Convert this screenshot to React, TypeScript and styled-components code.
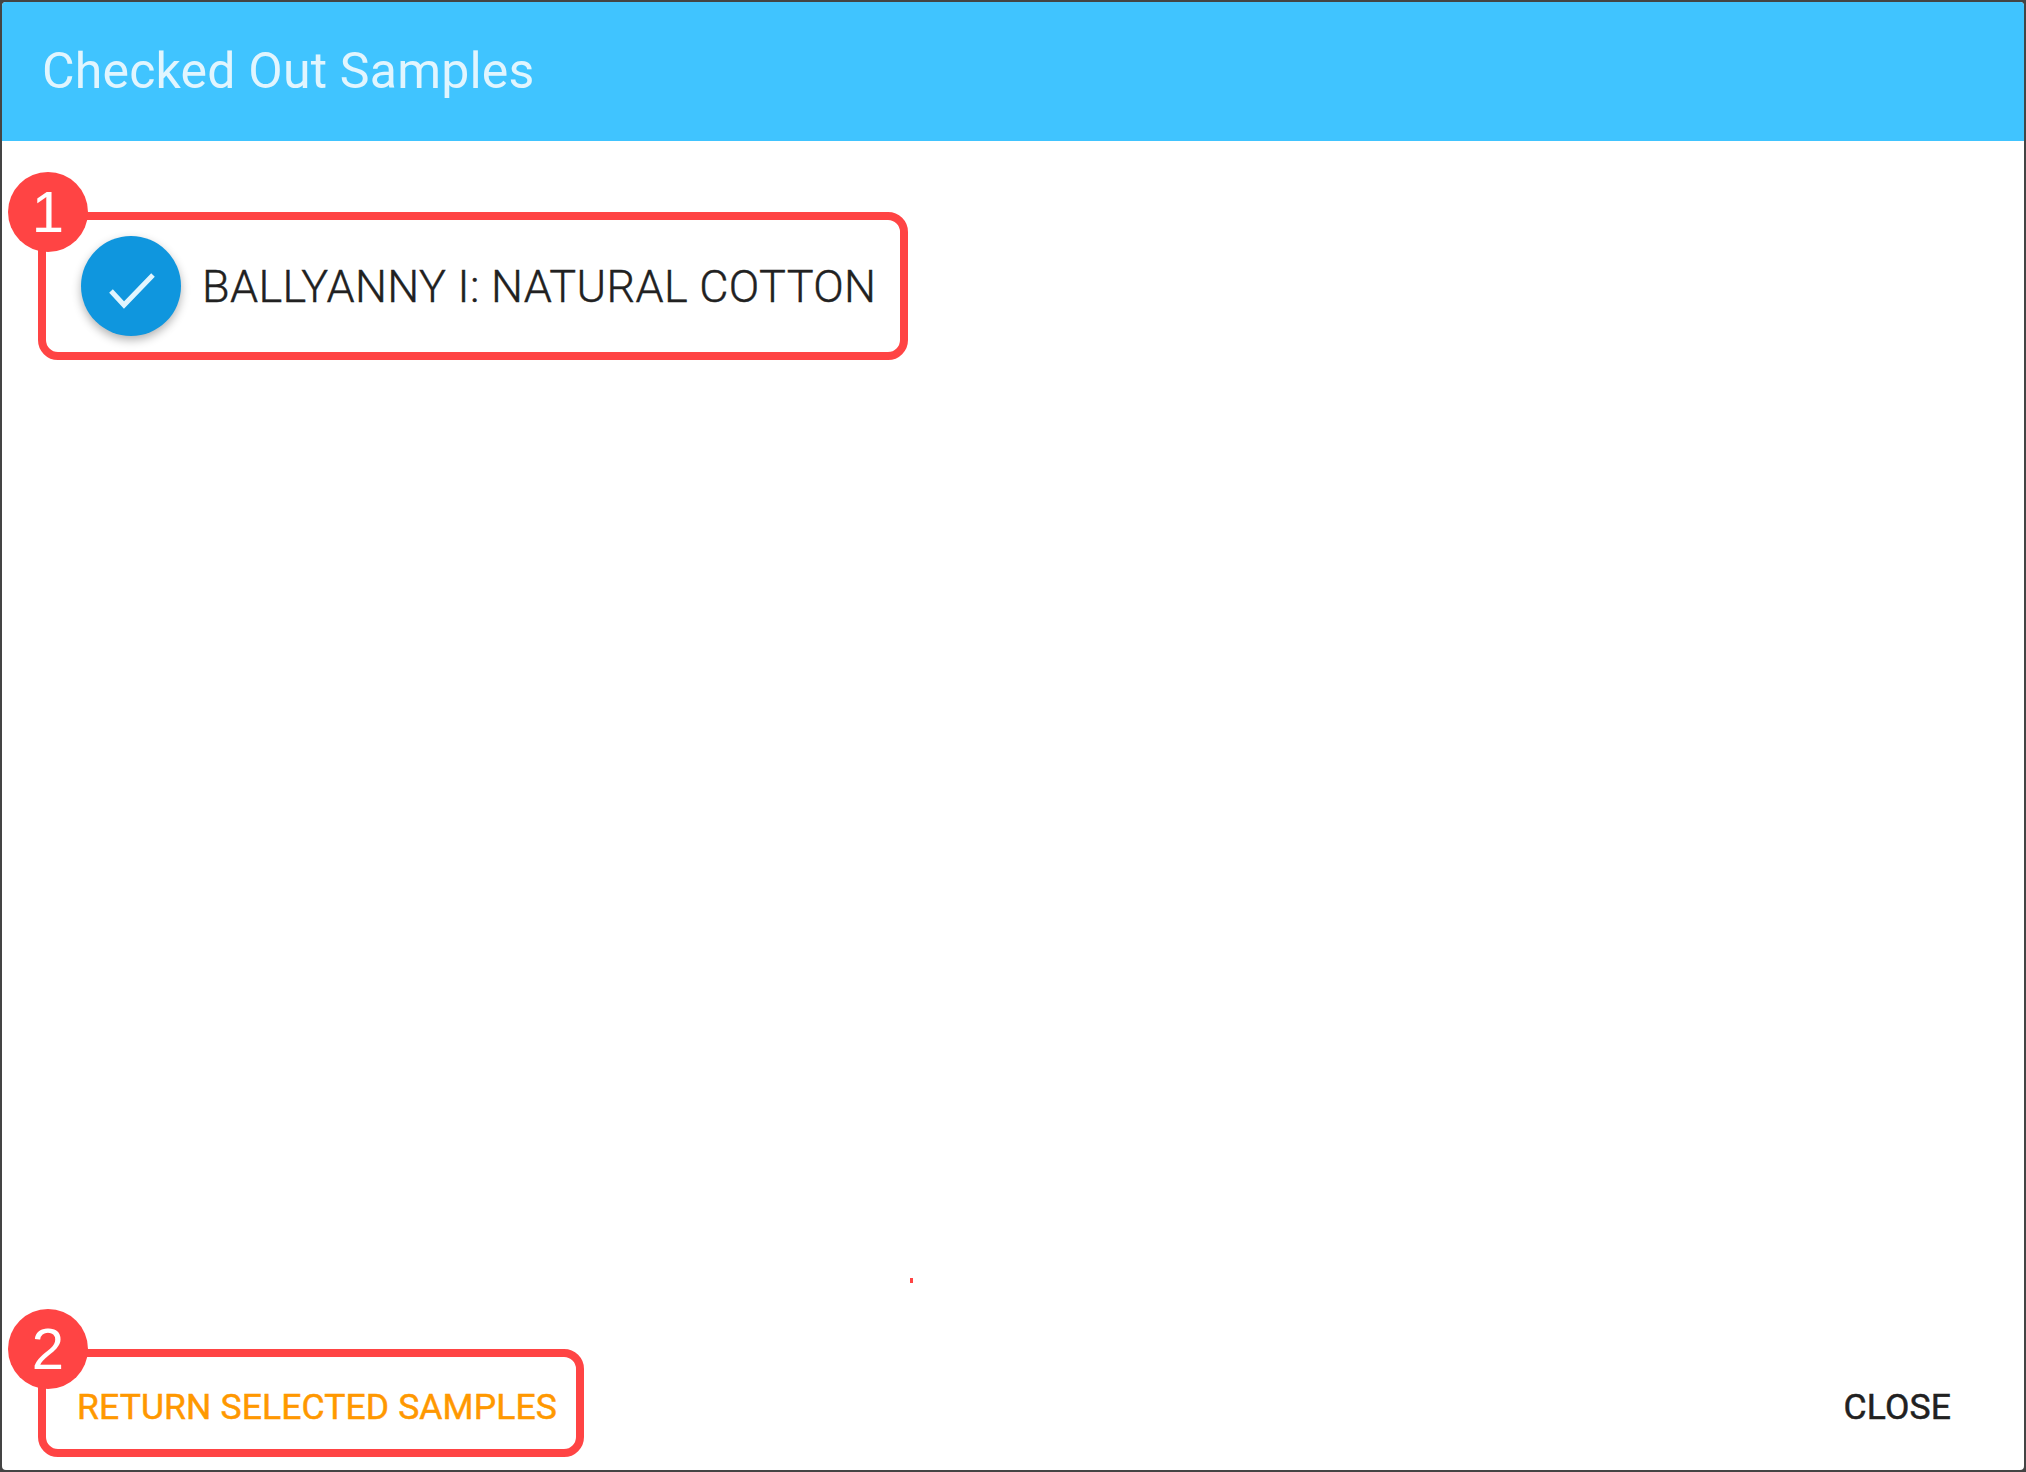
import React from "react";
import styled, { createGlobalStyle } from "styled-components";

const samples = ["BALLYANNY I: NATURAL COTTON"];

export default function App() {
  return (
    <>
      <GlobalStyles />
      <Dialog>
        <Header>
          <Title>Checked Out Samples</Title>
        </Header>
        <Content>
          <Callout>
            <Badge>1</Badge>
            {samples.map((name) => (
              <SampleRow key={name}>
                <Avatar>
                  <svg width="100" height="100" viewBox="0 0 100 100">
                    <path d="M30 55 L43 69 L72 39" fill="none" stroke="#e1f5fe" strokeWidth="5" />
                  </svg>
                </Avatar>
                <SampleName>{name}</SampleName>
              </SampleRow>
            ))}
          </Callout>
          <Speck />
        </Content>
        <Actions>
          <ReturnCallout>
            <Badge>2</Badge>
            <ActionButton $color="#ff9800">RETURN SELECTED SAMPLES</ActionButton>
          </ReturnCallout>
          <CloseButton $color="#212121">CLOSE</CloseButton>
        </Actions>
      </Dialog>
    </>
  );
}

const GlobalStyles = createGlobalStyle`
  html, body {
    margin: 0;
    height: 100%;
    background: #444444;
    font-family: Roboto, "Liberation Sans", sans-serif;
  }
  #root {
    height: 100%;
  }
`;

const Dialog = styled.div`
  box-sizing: border-box;
  width: 2026px;
  height: 1472px;
  border: 2px solid #444444;
  border-radius: 6px;
  background: #ffffff;
  display: flex;
  flex-direction: column;
  overflow: hidden;
`;

const Header = styled.header`
  box-sizing: border-box;
  height: 139px;
  flex-shrink: 0;
  background: #40c4ff;
  display: flex;
  align-items: center;
  padding: 0 40px 2px;
`;

const Title = styled.h1`
  margin: 0;
  font-size: 50px;
  font-weight: 400;
  letter-spacing: 0.2px;
  color: #e1f5fe;
`;

const Content = styled.main`
  flex: 1;
  position: relative;
  padding: 71px 0 0 36px;
`;

const Callout = styled.div`
  box-sizing: border-box;
  position: relative;
  width: 870px;
  height: 148px;
  border: 8px solid #ff4444;
  border-radius: 20px;
  display: flex;
  align-items: center;
`;

const Badge = styled.span`
  position: absolute;
  left: -38px;
  top: -48px;
  width: 80px;
  height: 80px;
  border-radius: 50%;
  background: #ff4444;
  color: #ffffff;
  font-family: "Liberation Sans", Arial, sans-serif;
  font-size: 58px;
  line-height: 80px;
  text-align: center;
`;

const SampleRow = styled.div`
  display: flex;
  align-items: center;
  gap: 21px;
  padding-left: 35px;
`;

const Avatar = styled.div`
  width: 100px;
  height: 100px;
  border-radius: 50%;
  background: #0f96de;
  box-shadow: 0 4px 10px rgba(0, 0, 0, 0.3);
  flex-shrink: 0;

  svg {
    display: block;
  }
`;

const SampleName = styled.span`
  font-size: 45px;
  font-weight: 300;
  letter-spacing: 0.34px;
  -webkit-text-stroke: 0.4px #212121;
  color: #212121;
  white-space: nowrap;
`;

const Speck = styled.i`
  position: absolute;
  left: 908px;
  top: 1137px;
  width: 3px;
  height: 5px;
  background: #ff4444;
`;

const Actions = styled.footer`
  display: flex;
  align-items: center;
  justify-content: space-between;
  padding: 0 73px 13px 36px;
`;

const ReturnCallout = styled.div`
  box-sizing: border-box;
  position: relative;
  width: 546px;
  height: 108px;
  border: 8px solid #ff4444;
  border-radius: 20px;
  display: flex;
  align-items: center;
  padding: 8px 0 0 31px;
`;

const ActionButton = styled.button<{ $color: string }>`
  border: 0;
  padding: 0;
  background: none;
  font-family: inherit;
  font-size: 35.5px;
  font-weight: 400;
  letter-spacing: 0.12px;
  -webkit-text-stroke: 0.5px ${({ $color }) => $color};
  color: ${({ $color }) => $color};
  white-space: nowrap;
`;

const CloseButton = styled(ActionButton)`
  margin-top: 8px;
`;
